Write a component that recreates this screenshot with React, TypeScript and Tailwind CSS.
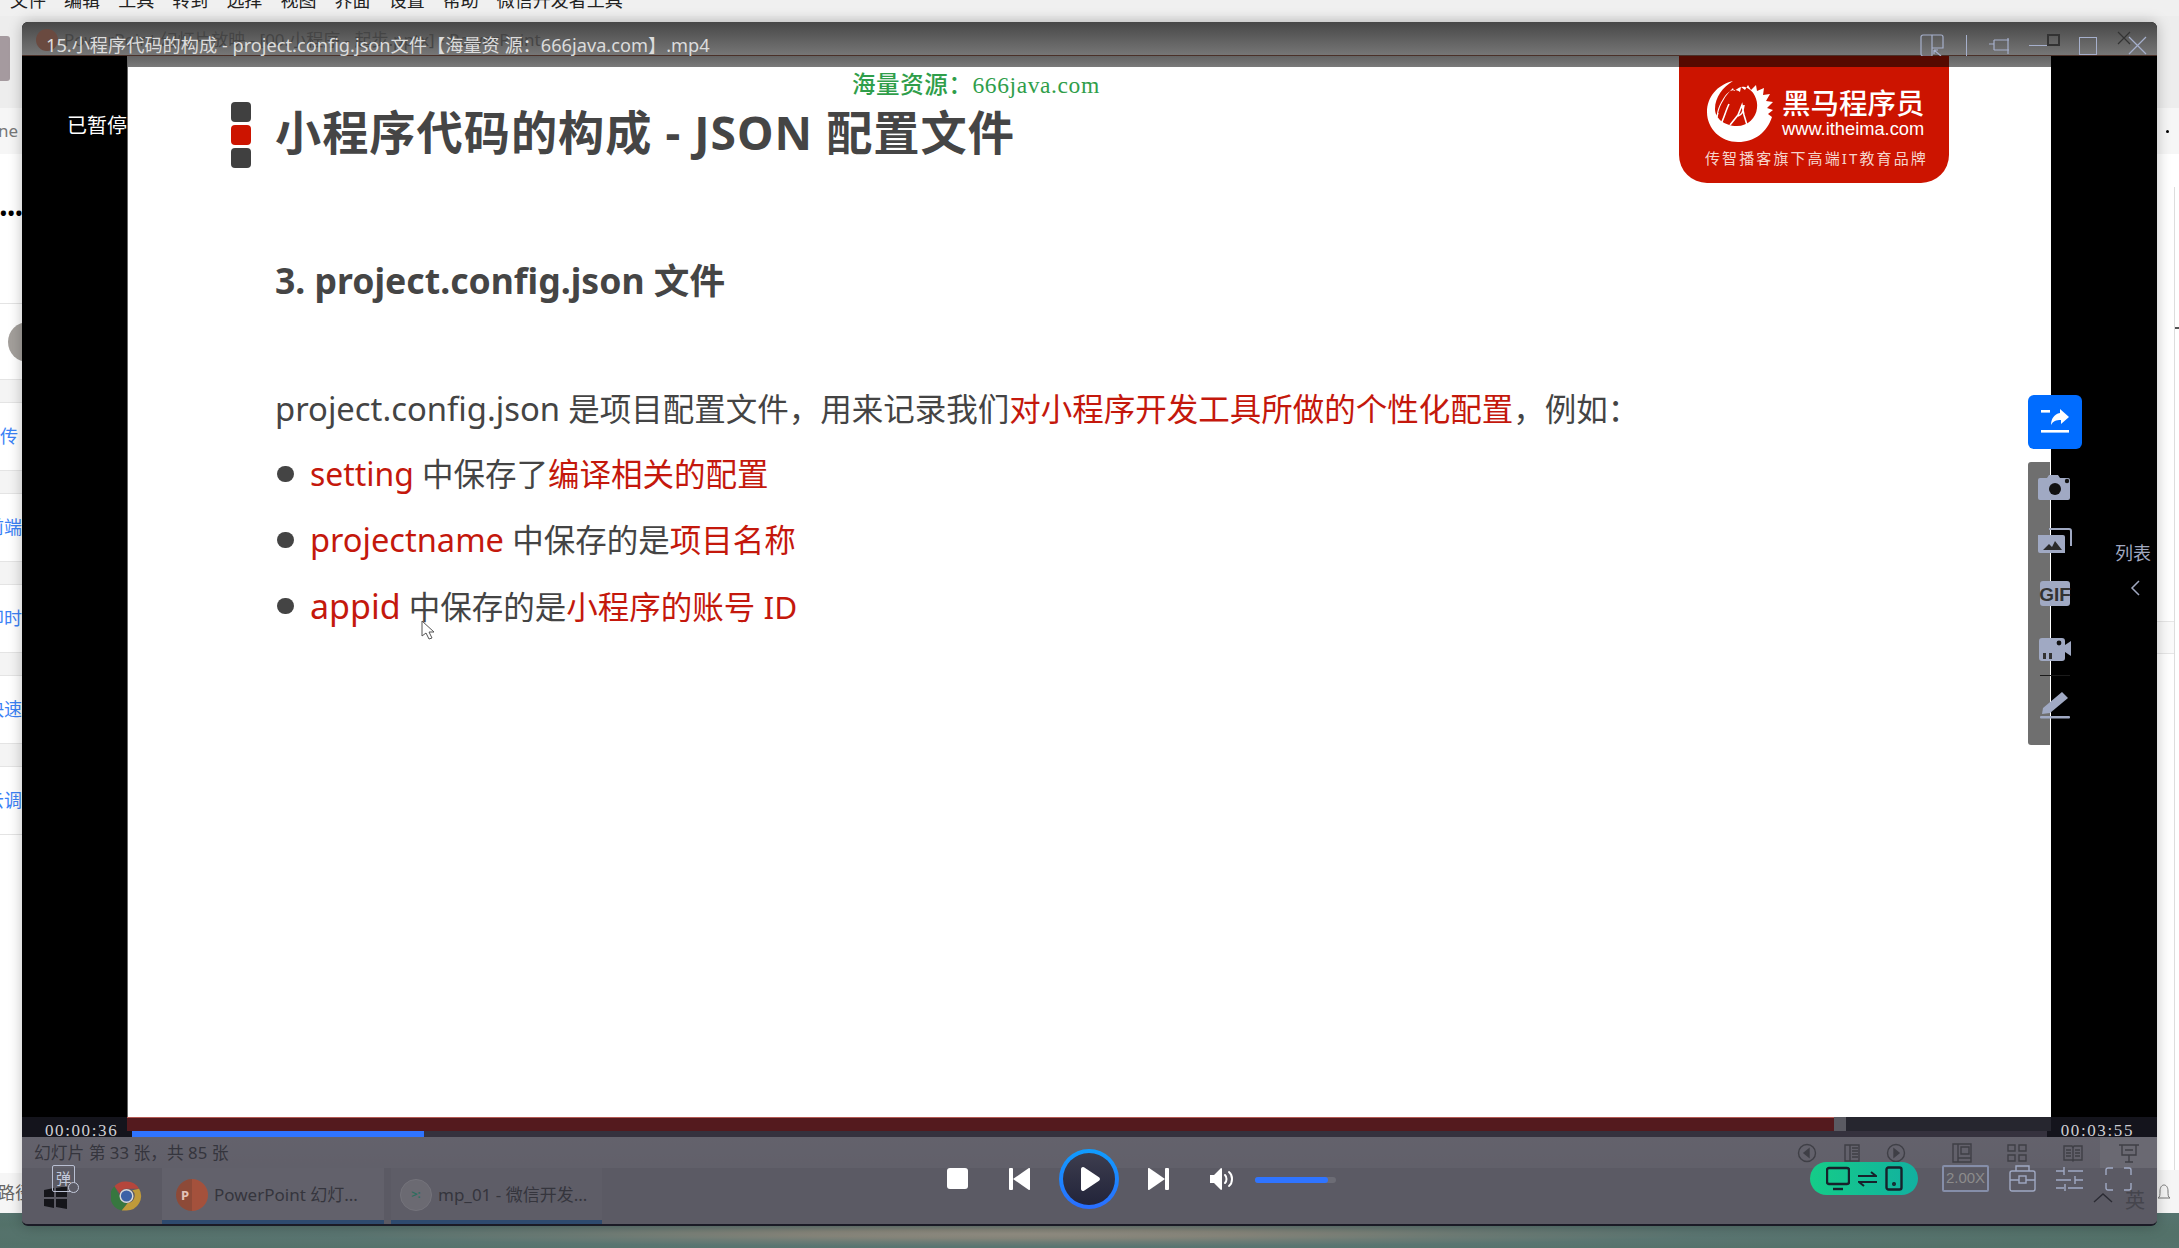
import React from 'react';

const MENU = ['文件', '编辑', '工具', '转到', '选择', '视图', '界面', '设置', '帮助', '微信开发者工具'];

const LEFT_LINKS = [
  { text: '上传', align: 'justify-start -ml-[18px]' },
  { text: '前端', align: 'justify-start -ml-[14px]' },
  { text: '即时', align: 'justify-start -ml-[14px]' },
  { text: '快速', align: 'justify-start -ml-[14px]' },
  { text: '云调', align: 'justify-start -ml-[14px]' },
];

const LeftColumn: React.FC = () => (
  <div className="w-[22px] shrink-0 flex flex-col overflow-hidden">
    <div className="h-[92px] bg-[#ededed] pt-[20px]">
      <div className="w-[10px] h-[45px] rounded-r-[3px] bg-[#a59a9f]" />
    </div>
    <div className="h-[46px] flex items-center bg-[#f6f6f6] text-[17px] text-[#777] -ml-[2px]">ne</div>
    <div className="h-[149px] bg-white pt-[50px] text-[18px] leading-[18px] tracking-[1px] text-black font-bold">•••</div>
    <div className="h-[76px] flex items-center border-t border-[#e4e4e4] bg-white">
      <div className="w-[40px] h-[40px] ml-[8px] shrink-0 rounded-full bg-[#a39f9b]" />
    </div>
    {LEFT_LINKS.map((link) => (
      <div key={link.text}>
        <div className="h-[23px] bg-[#f4f4f4] border-t border-[#e4e4e4]" />
        <div className={`h-[68px] flex items-center whitespace-nowrap border-t border-[#e4e4e4] bg-white text-[18px] text-[#3b82f6] ${link.align}`}>
          {link.text}
        </div>
      </div>
    ))}
    <div className="flex-1 bg-white border-t border-[#e4e4e4]" />
    <div className="h-[40px] flex items-center bg-[#f6f6f6] text-[17px] text-[#666] whitespace-nowrap -ml-[2px]">路径</div>
  </div>
);

const RightColumn: React.FC = () => (
  <div className="w-[22px] shrink-0 flex flex-col">
    <div className="h-[92px] bg-[#ededed]" />
    <div className="h-[46px] flex items-center pl-[9px] bg-[#f6f6f6]">
      <div className="w-[3px] h-[3px] rounded-full bg-black" />
    </div>
    <div className="flex-1 flex bg-white">
      <div className="w-[17px] flex flex-col">
        <div className="h-[467px]" />
        <div className="h-[33px] border-y border-[#e6e6e6] bg-[#fafafa]" />
      </div>
      <div className="w-[5px] mt-[33px] border-l border-[#ddd]">
        <div className="mt-[140px] h-[2px] bg-[#555]" />
      </div>
    </div>
    <div className="h-[43px] bg-[#f5f5f5] pt-[12px] pl-[1px]">
      <svg width="12" height="20" viewBox="0 0 12 20" fill="none" stroke="#777" strokeWidth="1">
        <path d="M0 16c2-1 2-3 2-7s2-6 4-6 4 2 4 6 0 6 2 7z" />
      </svg>
    </div>
  </div>
);

const SlideMark: React.FC = () => (
  <svg width="68" height="64" viewBox="0 0 68 64" fill="none">
    <path
      d="M27 2C11 6 1 18 1 33c0 17 14 30 31 30 17 0 29-10 34-25l-4-3 5-4-6-2 6-6-7-1 4-7-7 1 1-7-7 3-1-6-5 5-3-5-3 5-4-3-1 5C27 8 21 13 17 20 12 28 9 36 12 44c-1-6 0-14 5-22 3-6 7-10 10-13l1 3c5-4 8-5 11-4 9 3 13 13 12 21-1 10-9 18-20 18C18 47 9 39 9 30 9 18 17 8 27 2z"
      fill="#fff"
    />
    <path d="M15 45c3-6 5-14 8-20M24 46l8-10 4-10 2 10 3 10M38 26c-1 7-2 10-6 11" stroke="#fff" strokeWidth="1.6" />
    <path d="M13 46l-4-3 3-9" stroke="#fff" strokeWidth="1.4" />
  </svg>
);

const Logo: React.FC = () => (
  <div className="absolute right-[102px] top-0 w-[270px] h-[127px] rounded-b-[28px] bg-[#cc1400] overflow-hidden">
    <div className="h-[11px] bg-[#560a00]" />
    <div className="flex gap-[8px] pl-[27px] pt-[12px]">
      <SlideMark />
      <div className="flex flex-col pt-[10px] text-white">
        <div className="text-[28.5px] leading-[28px] font-medium whitespace-nowrap">黑马程序员</div>
        <div className="text-[18.3px] leading-[20px] mt-[2px] font-['Liberation_Sans',sans-serif] whitespace-nowrap">www.itheima.com</div>
      </div>
    </div>
    <div className="pl-[26px] mt-[6px] text-[15px] leading-[18px] tracking-[2.1px] text-[#f6d5cc] whitespace-nowrap">传智播客旗下高端IT教育品牌</div>
  </div>
);

const BLUE = '#a0a9c3';

const ToolIcon: React.FC<{ children: React.ReactNode; className?: string }> = ({ children, className }) => (
  <svg className={className} width="36" height="36" viewBox="0 0 36 36" fill={BLUE}>
    {children}
  </svg>
);

const SideTools: React.FC = () => (
  <div className="absolute -right-[31px] top-[339px] w-[54px] flex flex-col gap-[13px]">
    <div className="h-[54px] rounded-[6px] bg-[#006cff] flex items-center justify-center">
      <svg width="32" height="28" viewBox="0 0 32 28" fill="#fff">
        <rect x="2" y="2" width="9" height="2.6" />
        <rect x="2" y="22" width="28" height="2.6" />
        <path d="M21 1l9 8-8 7v-4c-5 0-8 1-10 5 0-6 3-11 9-12z" />
      </svg>
    </div>
    <div className="h-[283px] rounded-l-[3px] bg-[linear-gradient(90deg,#6f6f6f_22px,transparent_22px)] flex flex-col items-center pt-[8px] gap-[17px]">
      <ToolIcon>
        <path d="M3 8h7l2-3h9l2 3h8a2 2 0 0 1 2 2v18a2 2 0 0 1-2 2H3a2 2 0 0 1-2-2V10a2 2 0 0 1 2-2z" />
        <circle cx="18" cy="19" r="6" fill="#111" />
        <circle cx="30" cy="11" r="2.2" fill="#111" />
      </ToolIcon>
      <ToolIcon>
        <path d="M1 12h25a2 2 0 0 1 2 2v16H3a2 2 0 0 1-2-2z" />
        <path d="M6 27l6-6 3 3 3-6 7 9z" fill="#2a2a2a" />
        <path d="M12 6h20a2 2 0 0 1 2 2v15" fill="none" stroke={BLUE} strokeWidth="2" />
      </ToolIcon>
      <ToolIcon>
        <rect x="3" y="5" width="30" height="25" rx="3" />
        <text x="18" y="25" textAnchor="middle" fontSize="19" fontWeight="700" fill="#333" fontFamily="Liberation Sans">GIF</text>
      </ToolIcon>
      <ToolIcon className="mt-[2px]">
        <path d="M5 7h20a3 3 0 0 1 3 3v4l6-4v15l-6-4v6a3 3 0 0 1-3 3H5a3 3 0 0 1-3-3V10a3 3 0 0 1 3-3z" />
        <circle cx="22" cy="12" r="2.4" fill="#111" />
        <rect x="6" y="22" width="3" height="6" fill="#333" />
        <rect x="12" y="22" width="3" height="6" fill="#333" />
      </ToolIcon>
      <div className="w-[30px] h-px -my-[9px] bg-[#1b1b1b]" />
      <ToolIcon className="mt-[2px]">
        <path d="M6 22L25 6l6 6-18 15-8 1z" />
        <rect x="3" y="30" width="30" height="2.6" rx="1" />
      </ToolIcon>
    </div>
  </div>
);

const BULLETS = [
  { key: 'setting', size: 'text-[31.9px]', middle: ' 中保存了', value: '编译相关的配置' },
  { key: 'projectname', size: 'text-[32.6px]', middle: ' 中保存的是', value: '项目名称' },
  { key: 'appid', size: 'text-[34px]', middle: ' 中保存的是', value: '小程序的账号 ID' },
];

const Slide: React.FC = () => (
  <div className="relative w-[1924px] border-l border-[#666] bg-white font-['Noto_Sans','Noto_Sans_CJK_SC',sans-serif] text-[#444]">
    <div className="absolute inset-x-0 top-0 h-[11px] bg-[linear-gradient(#636363,#7a7a7a)]" />
    <div className="absolute left-[724px] top-[15px] text-[23.5px] leading-[28px] tracking-[0.6px] font-medium text-[#2f9e4a] font-['Liberation_Serif','Noto_Sans_CJK_SC',serif] whitespace-nowrap">
      海量资源：666java.com
    </div>
    <Logo />
    <div className="pl-[103px] pt-[46px] flex flex-col">
      <div className="flex items-center gap-[24px]">
        <div className="flex flex-col gap-[3px]">
          <div className="w-[20px] h-[20px] rounded-[4px] bg-[#404040]" />
          <div className="w-[20px] h-[20px] rounded-[4px] bg-[#cc1400]" />
          <div className="w-[20px] h-[20px] rounded-[4px] bg-[#404040]" />
        </div>
        <h1 className="-mt-[5px] text-[46.2px] leading-[66px] font-bold tracking-[1px] text-[#454545] whitespace-nowrap">小程序代码的构成 - JSON 配置文件</h1>
      </div>
      <h2 className="mt-[87px] pl-[44px] text-[35.6px] leading-[50px] font-bold text-[#454545] whitespace-nowrap">3. project.config.json 文件</h2>
      <p className="mt-[71px] pl-[44px] text-[31.5px] leading-[65px] whitespace-nowrap">
        <span className="text-[32.8px]">project.config.json</span> 是项目配置文件，用来记录我们<span className="text-[#c4180c]">对小程序开发工具所做的个性化配置</span>，例如：
      </p>
      {BULLETS.map((item) => (
        <div key={item.key} className="flex items-center pl-[46px] h-[66px]">
          <div className="w-[17px] h-[16px] rounded-full bg-[#444] mr-[16px]" />
          <p className="text-[31.5px] whitespace-pre">
            <span className={`${item.size} text-[#c4180c]`}>{item.key}</span>
            {item.middle}
            <span className="text-[#c4180c]">{item.value}</span>
          </p>
        </div>
      ))}
    </div>
    <svg className="absolute left-[293px] top-[564px]" width="14" height="20" viewBox="0 0 14 20" fill="#fff" stroke="#555" strokeWidth="1">
      <path d="M1 1v15l4-3 3 6 3-1-3-6h5z" />
    </svg>
    <SideTools />
  </div>
);

const TitleBar: React.FC = () => (
  <div className="relative h-[34px] shrink-0 flex items-center pl-[24px] pt-[14px] border-b border-[#4a3028] bg-[linear-gradient(#474747,#767676)]">
    <div className="absolute left-[14px] top-[5px] flex items-center gap-[6px] text-[17px] text-[#454545] whitespace-nowrap">
      <div className="w-[22px] h-[22px] rounded-full bg-[#6a4a40]" />
      PowerPoint 幻灯片放映 - [00.小程序 - 起步.pptx] - PowerPoint
    </div>
    <div className="relative text-[18.2px] text-[#dcdcdc] whitespace-nowrap">15.小程序代码的构成 - project.config.json文件【海量资 源：666java.com】.mp4</div>
    <div className="ml-auto flex items-center gap-[15px] pr-[6px] text-[#a6b0cc]">
      <svg width="24" height="24" viewBox="0 0 24 24" fill="none" stroke="currentColor" strokeWidth="1.2">
        <path d="M12 22H3a2 2 0 0 1-2-2V3a2 2 0 0 1 2-2h18a2 2 0 0 1 2 2v11H12zM12 1v21M14 16l7 6M14 16h4M14 16v4" />
      </svg>
      <div className="w-px h-[22px] bg-current ml-[7px]" />
      <svg className="ml-[6px]" width="22" height="18" viewBox="0 0 22 18" fill="none" stroke="currentColor" strokeWidth="1.2">
        <path d="M1 7h5M6 3h15M6 13h15M6 3v10M20 1v16" />
      </svg>
      <div className="flex items-center ml-[4px]">
        <div className="w-[18px] h-px bg-current" />
        <div className="w-[13px] h-[12px] -mt-[12px] border-2 border-[#333]" />
      </div>
      <div className="w-[18px] h-[18px] border border-current ml-[4px]" />
      <svg className="ml-[5px] -mt-[6px]" width="34" height="24" viewBox="0 0 34 24" fill="none" strokeWidth="1.2">
        <path d="M1 1l12 12M13 1L1 13" stroke="#333" />
        <path d="M12 6l17 17M29 6L12 23" stroke="currentColor" />
      </svg>
    </div>
  </div>
);

const PptIcon: React.FC<{ children: React.ReactNode }> = ({ children }) => (
  <svg width="20" height="20" viewBox="0 0 20 20" fill="none" stroke="#3f3f46" strokeWidth="1.4">
    {children}
  </svg>
);

const Taskbar: React.FC = () => (
  <div className="h-[88px] flex flex-col text-[#35353d] font-['Noto_Sans','Noto_Sans_CJK_SC',sans-serif]">
    <div className="h-[31px] flex items-center pl-[12px] bg-[#64636c]/60 text-[16.8px]">
      <span>幻灯片 第 33 张，共 85 张</span>
      <div className="ml-auto flex items-center h-full">
        <PptIcon>
          <circle cx="10" cy="10" r="8.5" />
          <path d="M12 6v8l-5-4z" fill="#3f3f46" />
        </PptIcon>
        <div className="ml-[25px]">
          <PptIcon>
            <path d="M3 2h14v16H3zM8 2v16M10 5h6M10 8h6M10 11h6M10 14h6" />
          </PptIcon>
        </div>
        <div className="ml-[24px]">
          <PptIcon>
            <circle cx="10" cy="10" r="8.5" />
            <path d="M8 6v8l5-4z" fill="#3f3f46" />
          </PptIcon>
        </div>
        <div className="ml-[46px]">
          <PptIcon>
            <path d="M1 1h18v18H1zM6 1v18M6 15h13M9 4h8v7H9z" />
          </PptIcon>
        </div>
        <div className="ml-[35px]">
          <PptIcon>
            <path d="M1 2h7v6H1zM12 2h7v6h-7zM1 12h7v6H1zM12 12h7v6h-7z" />
          </PptIcon>
        </div>
        <div className="ml-[36px]">
          <PptIcon>
            <path d="M1 3h8l1 2 1-2h8v14h-8l-1 1-1-1H1zM10 5v13M3 7h5M3 10h5M3 13h5M12 7h5M12 10h5M12 13h5" />
          </PptIcon>
        </div>
        <div className="ml-[17px] w-[57px] h-full flex items-center justify-center bg-[#6a6972]">
          <PptIcon>
            <path d="M0 2h20M3 2v10h14V2M6 7h8M10 12v7M6 19h8" />
          </PptIcon>
        </div>
      </div>
    </div>
    <div className="h-[57px] flex bg-[#5b5a64] text-[17px]">
      <div className="w-[140px] relative flex items-center">
        <svg className="absolute left-[22px] top-[19px]" width="24" height="22" viewBox="0 0 24 22" fill="#15151a">
          <path d="M0 3l10-2v9H0zM12 1l11-2v11H12zM0 12h10v9L0 19zM12 12h11v10l-11-2z" />
        </svg>
        <div className="absolute left-[30px] -top-[3px] w-[23px] h-[27px] border border-[#b9bfd2] rounded-[2px] text-[15px] leading-[24px] text-[#c4cadb] text-center">弹</div>
        <div className="absolute left-[46px] top-[14px] w-[11px] h-[11px] rounded-full border border-[#c4cadb] bg-[#5b5a64]" />
        <svg className="absolute left-[89px] top-[12px]" width="31" height="32" viewBox="0 0 32 32">
          <path d="M16 1a15 15 0 0 1 13 7.500H16a7.500 7.500 0 0 0-7 5L3.500 6A15 15 0 0 1 16 1z" fill="#b5463c" />
          <path d="M3.500 6L10 18a7.500 7.500 0 0 0 7 5.500L11 31A15 15 0 0 1 3.500 6z" fill="#37773f" />
          <path d="M29 8.500A15 15 0 0 1 16 31l-5 0 6.500-8A7.500 7.500 0 0 0 22 10z" fill="#bf9a3a" />
          <circle cx="16" cy="16" r="6.500" fill="#3c62a6" stroke="#d8d8d8" strokeWidth="1.500" />
        </svg>
      </div>
      <div className="w-[222px] relative flex items-center gap-[6px] pl-[14px] pt-[2px] bg-[#62616b] border-b-[5px] border-[#2e4a6e] whitespace-nowrap">
        <div className="w-[32px] h-[32px] rounded-full bg-[linear-gradient(90deg,#8d4a38_50%,#a4513c_50%)] text-[13px] leading-[32px] pl-[5px] font-bold text-[#e3c2b8]">P</div>
        PowerPoint 幻灯...
      </div>
      <div className="w-[211px] ml-[7px] relative flex items-center gap-[6px] pl-[9px] pt-[2px] bg-[#5e5d67] border-b-[5px] border-[#2e4a6e] whitespace-nowrap">
        <div className="w-[32px] h-[32px] rounded-full bg-[#6b6a72] border border-[#74737b] text-[11px] leading-[28px] text-center text-[#2e6e5e] font-bold">&gt;:</div>
        mp_01 - 微信开发...
      </div>
    </div>
  </div>
);

const PlayerControls: React.FC = () => (
  <div className="absolute inset-0 flex items-center pb-[4px] pl-[925px]">
    <div className="w-[21px] h-[21px] rounded-[3px] bg-white" />
    <svg className="ml-[41px]" width="22" height="22" viewBox="0 0 22 22" fill="#fff">
      <rect x="0" y="0" width="4" height="22" rx="1" />
      <path d="M21 1v20a1 1 0 0 1-1.500.800L4 11 19.500.200A1 1 0 0 1 21 1z" />
    </svg>
    <div className="ml-[28px] w-[60px] h-[60px] rounded-full p-[4px] bg-[linear-gradient(#0f9dff,#2a6dff)]">
      <div className="w-full h-full rounded-full bg-[linear-gradient(#3d3d4e,#22243a)] flex items-center justify-center pl-[3px]">
        <svg width="19" height="24" viewBox="0 0 19 24" fill="#fff">
          <path d="M0 2a2 2 0 0 1 3-1.700l15 10a2 2 0 0 1 0 3.400l-15 10A2 2 0 0 1 0 22z" />
        </svg>
      </div>
    </div>
    <svg className="ml-[28px]" width="22" height="22" viewBox="0 0 22 22" fill="#fff">
      <rect x="18" y="0" width="4" height="22" rx="1" />
      <path d="M1 1v20a1 1 0 0 0 1.500.800L18 11 2.500.200A1 1 0 0 0 1 1z" />
    </svg>
    <svg className="ml-[40px]" width="26" height="24" viewBox="0 0 26 24" fill="none" stroke="#fff" strokeWidth="2" strokeLinecap="round">
      <path d="M1 8h4l7-7a1 1 0 0 1 1 1v20a1 1 0 0 1-1 1l-7-7H1z" fill="#fff" stroke="none" />
      <path d="M16 8c2 2 2 6 0 8M20 5c4 3 4 11 0 14" />
    </svg>
    <div className="ml-[20px] w-[81px] h-[6px] rounded-full bg-[#6c6c75] mt-[3px]">
      <div className="w-[73px] h-full rounded-full bg-[#2f74ff]" />
    </div>
    <div className="ml-[474px] w-[108px] h-[33px] rounded-full bg-[linear-gradient(90deg,#15cc88,#12b0a0)] flex items-center justify-center gap-[8px] text-[#17212b]">
      <svg width="24" height="25" viewBox="0 0 24 25" fill="none" stroke="currentColor" strokeWidth="2.400">
        <rect x="1" y="2" width="22" height="16" rx="2" />
        <path d="M7 23h10" />
      </svg>
      <svg width="19" height="18" viewBox="0 0 19 18" fill="none" stroke="currentColor" strokeWidth="2">
        <path d="M0 6h18l-5-4M19 12H1l5 4" />
      </svg>
      <svg width="18" height="25" viewBox="0 0 18 25" fill="none" stroke="currentColor" strokeWidth="2.400">
        <rect x="1.500" y="1.500" width="15" height="22" rx="2" />
        <circle cx="9" cy="18" r="0.800" />
      </svg>
    </div>
    <div className="ml-[24px] w-[47px] h-[27px] rounded-[2px] border-2 border-[#858ea9] flex items-center justify-center text-[15px] text-[#8c8c8c] font-['Liberation_Sans',sans-serif]">2.00X</div>
    <svg className="ml-[20px]" width="27" height="27" viewBox="0 0 27 27" fill="none" stroke="#a0a9c3" strokeWidth="1.400">
      <rect x="1" y="6" width="25" height="20" rx="2" />
      <path d="M7 6V1h13v5M1 15h9M17 15h9" />
      <rect x="10" y="11" width="7" height="7" />
    </svg>
    <svg className="ml-[20px]" width="27" height="24" viewBox="0 0 27 24" fill="none" stroke="#a0a9c3" strokeWidth="1.400">
      <path d="M0 4h8M12 4h15M8 0v8M0 13h15M19 13h8M19 9v8M0 21h8M12 21h15M9 17v7" />
    </svg>
    <svg className="ml-[22px]" width="27" height="24" viewBox="0 0 27 24" fill="none" stroke="#a0a9c3" strokeWidth="1.400">
      <path d="M8 1H3a2 2 0 0 0-2 2v5M19 1h5a2 2 0 0 1 2 2v5M8 23H3a2 2 0 0 1-2-2v-5M19 23h5a2 2 0 0 0 2-2v-5" />
    </svg>
    <svg className="absolute left-[2071px] top-[55px]" width="20" height="11" viewBox="0 0 20 11" fill="none" stroke="#2b2b33" strokeWidth="1.400">
      <path d="M1 10l9-8 9 8" />
    </svg>
    <div className="absolute left-[2103px] top-[52px] text-[20px] leading-[24px] text-[#45454d]">英</div>
  </div>
);

const Progress: React.FC = () => (
  <div className="relative z-10 h-[20px] shrink-0 bg-[#14141c] font-['Liberation_Serif',serif] text-[17px] tracking-[1.6px] text-[#cfcfd4]">
    <div className="ml-[105px] h-[14px] flex">
      <div className="w-[1707px] border-t border-[#b45a54] bg-[#541a1e]" />
      <div className="w-[12px] bg-[#5a5a62]" />
      <div className="w-[205px] bg-[#26262f]" />
    </div>
    <div className="ml-[110px] w-[1915px] h-[6px] bg-[#35323e]">
      <div className="w-[292px] h-full bg-[#2f74ff]" />
    </div>
    <div className="absolute left-[23px] top-[4px] leading-[20px]">00:00:36</div>
    <div className="absolute right-[23px] top-[4px] leading-[20px]">00:03:55</div>
  </div>
);

const PlayerWindow: React.FC = () => (
  <div className="absolute left-[22px] top-[22px] w-[2135px] h-[1204px] flex flex-col overflow-hidden rounded-[6px] border-b-2 border-[#1b1b26] bg-black shadow-[0_0_14px_rgba(0,0,0,0.25)] font-['Noto_Sans','Noto_Sans_CJK_SC',sans-serif]">
    <TitleBar />
    <div className="flex-1 flex min-h-0">
      <div className="w-[105px] shrink-0 overflow-hidden pt-[55px] pl-[45px] text-[20px] leading-[30px] text-white whitespace-nowrap">已暂停</div>
      <Slide />
      <div className="flex-1 flex flex-col items-end pt-[484px] pr-[6px] text-[18px] leading-[26px] text-[#a0a8c0]">
        <div>列表</div>
        <svg className="mt-[14px] mr-[11px]" width="10" height="16" viewBox="0 0 10 16" fill="none" stroke="#a0a8c0" strokeWidth="1.500">
          <path d="M9 1L2 8l7 7" />
        </svg>
      </div>
    </div>
    <Progress />
    <div className="relative h-[87px] shrink-0 bg-[linear-gradient(#62616b,#565660)]">
      <Taskbar />
      <PlayerControls />
    </div>
  </div>
);

export default function App() {
  return (
    <div className="relative w-[2179px] h-[1248px] overflow-hidden flex flex-col bg-[#ededed] font-['Noto_Sans','Noto_Sans_CJK_SC',sans-serif]">
      <div className="h-[16px] shrink-0 overflow-hidden flex gap-[18.1px] pl-[10px] bg-[#f0f0f0] text-[18px] leading-[24px] text-[#222]">
        {MENU.map((item) => (
          <span key={item} className="-mt-[12px] whitespace-nowrap">
            {item}
          </span>
        ))}
      </div>
      <div className="flex-1 flex min-h-0">
        <LeftColumn />
        <div className="flex-1" />
        <RightColumn />
      </div>
      <div className="h-[35px] shrink-0 bg-[radial-gradient(ellipse_at_47%_60%,#918d82_0%,#86857a_14%,#6c7b75_28%,#5a7571_42%,#537169_70%,#567470_100%)]" />
      <PlayerWindow />
    </div>
  );
}
